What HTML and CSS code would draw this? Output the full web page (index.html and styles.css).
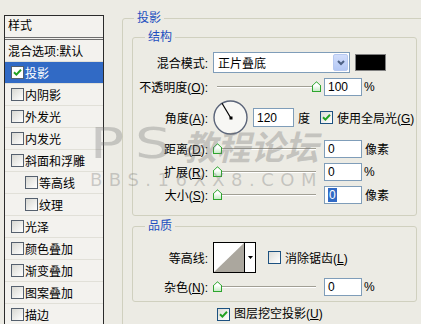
FILE: index.html
```html
<!DOCTYPE html>
<html lang="zh-CN">
<head>
    <meta charset="UTF-8">
    <title>图层样式 - 投影</title>
    <link rel="stylesheet" href="styles.css">
</head>
<body>

<div class="dialog">
    <div class="styles-list">
        <div class="list-head">样式</div>
        <div class="list-item plain">混合选项:默认</div>
        <div class="list-item selected"><span class="cb"><svg width="9" height="9" viewBox="0 0 9 9"><path d="M1 4.2 L3.4 6.6 L8 1.8" stroke="#21A121" stroke-width="2" fill="none"/></svg></span>投影</div>
        <div class="list-item"><span class="cb"></span>内阴影</div>
        <div class="list-item"><span class="cb"></span>外发光</div>
        <div class="list-item"><span class="cb"></span>内发光</div>
        <div class="list-item"><span class="cb"></span>斜面和浮雕</div>
        <div class="list-item sub"><span class="cb"></span>等高线</div>
        <div class="list-item sub"><span class="cb"></span>纹理</div>
        <div class="list-item"><span class="cb"></span>光泽</div>
        <div class="list-item"><span class="cb"></span>颜色叠加</div>
        <div class="list-item"><span class="cb"></span>渐变叠加</div>
        <div class="list-item"><span class="cb"></span>图案叠加</div>
        <div class="list-item"><span class="cb"></span>描边</div>
    </div>

    <div class="settings">
        <fieldset class="group outer">
            <legend class="lg-outer">投影</legend>

            <fieldset class="group inner">
                <legend class="lg-inner">结构</legend>
                <div class="rows struct-rows">
                    <div class="row">
                        <span class="lbl">混合模式:</span>
                        <div class="select">
                            <span class="select-text">正片叠底</span>
                            <span class="select-btn"><svg width="8" height="6" viewBox="0 0 8 6"><path d="M1 1 L4 4 L7 1" stroke="#4D6185" stroke-width="2" fill="none"/></svg></span>
                        </div>
                        <span class="swatch"></span>
                    </div>
                    <div class="row slide">
                        <span class="lbl">不透明度(<u>O</u>):</span>
                        <div class="slider"><span class="thumb at-max"></span></div>
                        <span class="field">100</span>
                        <span class="unit">%</span>
                    </div>
                    <div class="row">
                        <span class="lbl">角度(<u>A</u>):</span>
                        <svg class="dial" width="35" height="35" viewBox="0 0 35 35">
                            <circle cx="17.5" cy="17.5" r="16.5" fill="#F7F7F4" stroke="#5A6479" stroke-width="1.4"/>
                            <line x1="17.5" y1="17.5" x2="9" y2="3.2" stroke="#000" stroke-width="1.2"/>
                            <rect x="16.5" y="16.5" width="3" height="3" fill="#000"/>
                        </svg>
                        <span class="field wide">120</span>
                        <span class="unit deg">度</span>
                        <span class="cb blue global"><svg width="9" height="9" viewBox="0 0 9 9"><path d="M1 4.2 L3.4 6.6 L8 1.8" stroke="#21A121" stroke-width="2" fill="none"/></svg></span>
                        <span class="cb-label">使用全局光(<u>G</u>)</span>
                    </div>
                    <div class="row slide">
                        <span class="lbl">距离(<u>D</u>):</span>
                        <div class="slider"><span class="thumb"></span></div>
                        <span class="field">0</span>
                        <span class="unit px">像素</span>
                    </div>
                    <div class="row slide">
                        <span class="lbl">扩展(<u>R</u>):</span>
                        <div class="slider"><span class="thumb"></span></div>
                        <span class="field">0</span>
                        <span class="unit">%</span>
                    </div>
                    <div class="row slide">
                        <span class="lbl">大小(<u>S</u>):</span>
                        <div class="slider"><span class="thumb"></span></div>
                        <span class="field"><span class="sel">0</span></span>
                        <span class="unit px">像素</span>
                    </div>
                </div>
            </fieldset>

            <fieldset class="group inner quality">
                <legend class="lg-inner">品质</legend>
                <div class="rows quality-rows">
                    <div class="row">
                        <span class="lbl">等高线:</span>
                        <div class="contour">
                            <svg width="30" height="29" viewBox="0 0 30 29"><rect width="30" height="29" fill="#fff"/><polygon points="0,29 30,0 30,29" fill="#ABA79E"/></svg>
                            <span class="drop"><svg width="5" height="3" viewBox="0 0 5 3"><path d="M0 0 H5 L2.5 3 Z" fill="#000"/></svg></span>
                        </div>
                        <span class="cb blue smooth"></span>
                        <span class="cb-label">消除锯齿(<u>L</u>)</span>
                    </div>
                    <div class="row slide">
                        <span class="lbl">杂色(<u>N</u>):</span>
                        <div class="slider"><span class="thumb"></span></div>
                        <span class="field">0</span>
                        <span class="unit">%</span>
                    </div>
                </div>
            </fieldset>

            <div class="row knockout">
                <span class="cb blue"><svg width="9" height="9" viewBox="0 0 9 9"><path d="M1 4.2 L3.4 6.6 L8 1.8" stroke="#21A121" stroke-width="2" fill="none"/></svg></span>
                <span class="cb-label">图层挖空投影(<u>U</u>)</span>
            </div>
        </fieldset>
    </div>

    <div class="watermark">
        <div class="wm-top"><span class="wm-ps">PS</span><span class="wm-cn">教程论坛</span></div>
        <div class="wm-url">BBS.16XX8.COM</div>
    </div>
</div>

</body>
</html>
```

FILE: styles.css
```css
body {
    margin: 0;
    width: 421px;
    height: 324px;
    overflow: hidden;
    background-color: #ECEBE4;
    font-family: "Liberation Sans", "Noto Sans CJK SC", sans-serif;
    font-size: 12px;
    color: #000;
}
u {
    text-decoration: underline;
    text-underline-offset: 1px;
}
.dialog {
    position: relative;
    display: flex;
    align-items: flex-start;
    height: 324px;
    overflow: hidden;
}

/* style list on the left */
.styles-list {
    flex-shrink: 0;
    width: 100px;
    margin: 15px 0 0 4px;
    box-sizing: border-box;
    border: 1px solid #2B2B2B;
    background-color: #F3F2EE;
}
.list-head {
    height: 21px;
    line-height: 21px;
    padding-left: 3px;
    border-bottom: 3px double #6E6E6E;
}
.list-item {
    display: flex;
    align-items: center;
    height: 21px;
    padding-left: 6px;
    border-bottom: 1px solid #E1E0D8;
    white-space: nowrap;
}
.list-item.plain {
    padding-left: 3px;
}
.list-item.sub {
    padding-left: 20px;
}
.list-item.selected {
    background-color: #316AC5;
    color: #fff;
}
.list-item.selected .cb {
    background: #fff;
}

/* checkboxes */
.cb {
    display: flex;
    align-items: center;
    justify-content: center;
    flex-shrink: 0;
    width: 11px;
    height: 11px;
    margin-right: 1px;
    border: 1px solid #55606E;
    background: linear-gradient(135deg, #D8D8D2, #FFFFFF);
}
.cb.blue {
    border-color: #1C5180;
    background: linear-gradient(135deg, #DCDCD7, #FFFFFF);
}
.cb-label {
    margin-left: 3px;
    white-space: nowrap;
}

/* right side groups */
.settings {
    margin-left: 18px;
}
.group {
    margin: 0;
    padding: 0;
    min-width: 0;
    border: 1px solid #D0D0BF;
    border-radius: 3px;
}
.group legend {
    padding: 0 3px;
    line-height: 16px;
    color: #1D4FBF;
}
.outer {
    width: 340px;
    height: 360px;
    margin-top: 10px;
    padding-left: 9px;
    box-sizing: border-box;
}
.lg-outer {
    margin-left: 2px;
}
.inner {
    width: 285px;
    box-sizing: border-box;
    margin-top: 3px;
}
.lg-inner {
    margin-left: 12px;
}
.quality {
    margin-top: 2px;
}
.rows {
    display: flex;
    flex-direction: column;
    gap: 4px;
}
.struct-rows {
    padding: 7px 0 11px;
}
.quality-rows {
    padding: 8px 0 5px;
}
.row {
    display: flex;
    align-items: center;
}
.row.slide {
    height: 19px;
}
.lbl {
    flex-shrink: 0;
    width: 75px;
    margin-right: 5px;
    text-align: right;
    white-space: nowrap;
}

/* controls */
.select {
    display: flex;
    align-items: center;
    justify-content: space-between;
    width: 137px;
    height: 21px;
    box-sizing: border-box;
    border: 1px solid #7F9DB9;
    background-color: #fff;
    padding: 1px;
}
.select-text {
    padding-left: 3px;
}
.select-btn {
    display: flex;
    align-items: center;
    justify-content: center;
    width: 15px;
    height: 17px;
    box-sizing: border-box;
    border: 1px solid #B7C9F1;
    border-radius: 2px;
    background: linear-gradient(#D2DEFB, #B4C8F5);
}
.swatch {
    width: 31px;
    height: 17px;
    margin-left: 5px;
    box-sizing: border-box;
    border: 1px solid #808080;
    background-color: #000;
}
.slider {
    position: relative;
    width: 107px;
    height: 11px;
}
.slider::before {
    content: "";
    position: absolute;
    left: 4px;
    right: 4px;
    top: 5px;
    border-top: 1px solid #A19F94;
    border-bottom: 1px solid #fff;
}
.thumb {
    position: absolute;
    left: 0;
    top: 0;
    width: 9px;
    height: 11px;
    background: linear-gradient(#FFFFFF 40%, #BDE8BD);
    clip-path: polygon(50% 0, 100% 38%, 100% 100%, 0 100%, 0 38%);
}
.thumb::after {
    content: "";
    position: absolute;
    inset: 0;
    background: #2EA52E;
    clip-path: polygon(50% 0, 100% 38%, 100% 100%, 0 100%, 0 38%, 11% 42%, 11% 91%, 89% 91%, 89% 42%, 50% 11%, 11% 42%, 0 38%);
}
.thumb.at-max {
    left: 99px;
}
.field {
    display: flex;
    align-items: center;
    width: 38px;
    height: 18px;
    margin-left: 4px;
    padding-left: 3px;
    box-sizing: border-box;
    border: 1px solid #7F9DB9;
    background-color: #fff;
}
.field.wide {
    width: 41px;
    height: 19px;
    margin-left: 5px;
}
.sel {
    background-color: #316AC5;
    color: #fff;
    padding: 0 1px;
}
.unit {
    margin-left: 2px;
}
.unit.px {
    margin-left: 3px;
}
.unit.deg {
    margin-left: 4px;
}
.global {
    margin-left: 10px;
}
.dial {
    flex-shrink: 0;
}
.contour {
    display: flex;
    height: 29px;
    border: 1px solid #000;
    background-color: #fff;
}
.drop {
    display: flex;
    align-items: center;
    justify-content: center;
    width: 10px;
    border-left: 1px solid #000;
}
.smooth {
    margin-left: 12px;
}
.knockout {
    height: 13px;
    margin-top: 6px;
    padding-left: 85px;
    line-height: 13px;
}

/* watermark laid over the dialog */
.watermark {
    position: absolute;
    left: 90px;
    top: 118px;
    pointer-events: none;
    color: rgba(120, 120, 120, 0.34);
}
.wm-top {
    display: flex;
    align-items: flex-end;
    height: 52px;
}
.wm-ps {
    display: inline-block;
    width: 92px;
    font-family: "DejaVu Sans", sans-serif;
    font-size: 42px;
    line-height: 52px;
    letter-spacing: 8px;
    transform: scaleX(1.35);
    transform-origin: left center;
}
.wm-cn {
    margin-left: 4px;
    font-family: "Noto Sans CJK SC", sans-serif;
    font-size: 34px;
    font-weight: bold;
    line-height: 48px;
    transform: skewX(-14deg);
}
.wm-url {
    font-family: "DejaVu Sans", sans-serif;
    font-size: 18px;
    line-height: 20px;
    letter-spacing: 6.5px;
}
```
